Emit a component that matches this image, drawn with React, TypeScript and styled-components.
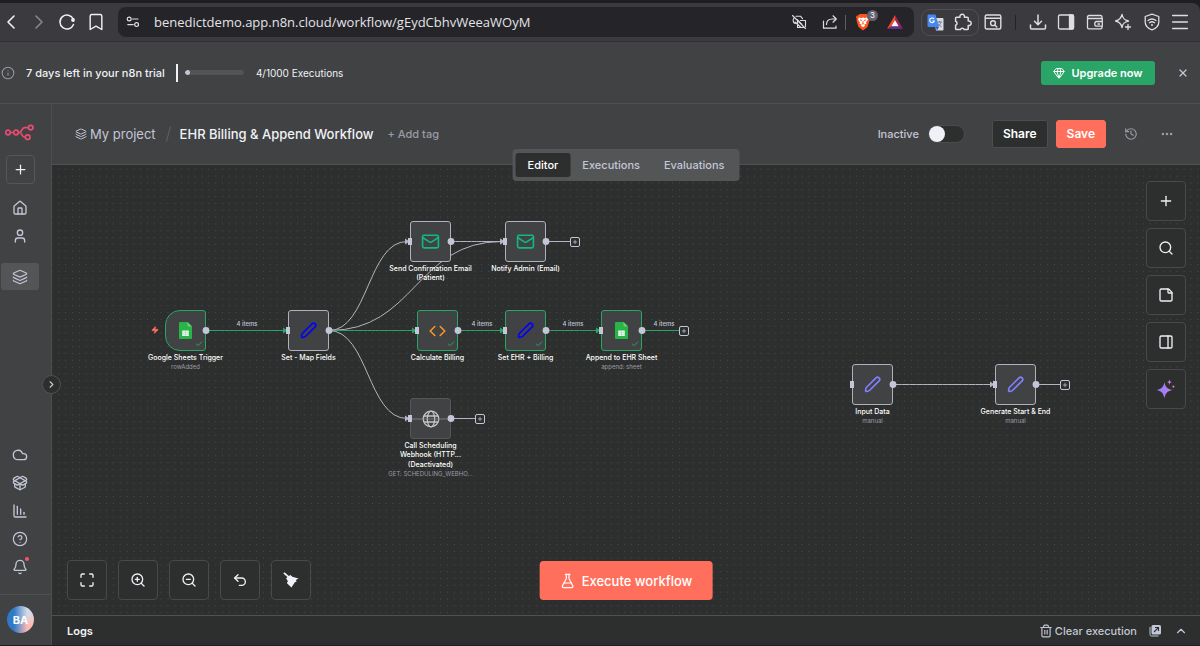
import React from "react";
import styled, { createGlobalStyle, css } from "styled-components";
import {
  Bell, Bookmark, ChartColumnDecreasing, ChevronLeft, ChevronRight, ChevronUp, CircleQuestionMark, Cloud,
  Ellipsis, FlaskConical, Gem, History, House, Info, Layers, Mail, Maximize, Menu, PackageOpen, PanelRight,
  Plus, Search, StickyNote, Trash2, Undo2, User, X, Zap, ZoomIn, ZoomOut, Check,
} from "lucide-react";

const c = {
  frame: "#1f1e23",
  chrome: "#3b3a3e",
  field: "#252429",
  panel: "#414244",
  canvas: "#2d2e2e",
  line: "#505153",
  soft: "#c3c6d6",
  text: "#f0f1f6",
  muted: "#9a9ca6",
  coral: "#ff6f5c",
  green: "#29a568",
  wire: "#b4b5c0",
};

const GlobalStyle = createGlobalStyle`
  *, *::before, *::after { box-sizing: border-box; }
  html, body { margin: 0; background: ${c.frame}; }
  body { font-family: Inter, "Liberation Sans", sans-serif; color: ${c.text}; font-size: 11px; line-height: 16px; }
  button, input { font: inherit; color: inherit; }
  button { cursor: pointer; padding: 0; }
  svg { display: block; flex: none; }
`;

const Page = styled.div`
  min-height: 100vh;
  display: flex;
  flex-direction: column;
  padding: 3px 0 1px;
`;

/* ---------- browser bar ---------- */
const BrowserBar = styled.header`
  height: 39px;
  display: flex;
  align-items: center;
  background: ${c.chrome};
  border-bottom: 1px solid #2f2e33;
  border-radius: 0 8px 0 0;
  color: #dddde2;
`;
const ChromeButton = styled.button<{ $width?: number; $dim?: boolean }>`
  width: ${(p) => p.$width ?? 28}px;
  height: 28px;
  flex: none;
  display: flex;
  align-items: center;
  justify-content: center;
  border: 0;
  background: none;
  color: ${(p) => (p.$dim ? "#88878c" : "inherit")};
`;
const NavButtons = styled.div`
  display: flex;
  width: 118px;
  padding-left: 1px;
  flex: none;
  color: #f1f1f4;
`;
const AddressBar = styled.div`
  flex: 1;
  min-width: 0;
  height: 30px;
  display: flex;
  align-items: center;
  background: ${c.field};
  border-radius: 8px;
  padding: 0 4px 0 1px;
`;
const UrlInput = styled.input`
  flex: 1;
  min-width: 0;
  margin-left: 7px;
  padding: 0;
  border: 0;
  outline: 0;
  background: none;
  color: #e3e3e8;
  font-family: "Open Sans", "Noto Sans", sans-serif;
  font-size: 13px;
  line-height: 20px;
`;
const Separator = styled.span<{ $dark?: boolean }>`
  width: 1px;
  height: 15px;
  flex: none;
  background: ${(p) => (p.$dark ? "#242328" : "#5d5c62")};
`;
const ShieldButton = styled(ChromeButton)`
  position: relative;
`;
const Count = styled.span`
  position: absolute;
  top: 2px;
  right: 2px;
  width: 11px;
  height: 11px;
  border-radius: 6px;
  background: #62636f;
  color: #fff;
  font-size: 8px;
  line-height: 11px;
`;
const ExtensionGroup = styled.div`
  display: flex;
  align-items: center;
  height: 27px;
  margin-left: 7px;
  border: 1px solid #504f54;
  border-radius: 9px;
`;
const ChromeTools = styled.div`
  display: flex;
  align-items: center;
  padding-right: 6px;
`;

/* ---------- trial banner ---------- */
const Banner = styled.section`
  height: 62px;
  display: flex;
  align-items: center;
  padding: 0 9px 0 1px;
  background: ${c.panel};
  border-bottom: 1px solid #4e4f50;
  font-weight: 500;
`;
const BannerText = styled.p`
  margin: 0 11px;
`;
const Caret = styled.span`
  width: 2px;
  height: 18px;
  background: #f1f1f5;
`;
const Usage = styled.label`
  display: flex;
  align-items: center;
  gap: 12px;
  margin-left: 7px;
  font-size: 10px;
  font-weight: 400;
`;
const Meter = styled.progress`
  appearance: none;
  width: 59px;
  height: 5px;
  border: 0;
  border-radius: 3px;
  overflow: hidden;
  &::-webkit-progress-bar { background: #535456; border-radius: 3px; }
  &::-webkit-progress-value { background: ${c.soft}; border-radius: 3px; min-width: 5px; }
`;
const UpgradeButton = styled.button`
  display: flex;
  align-items: center;
  justify-content: center;
  gap: 6px;
  width: 114px;
  height: 24px;
  margin-left: auto;
  border: 0;
  border-radius: 3px;
  background: ${c.green};
  color: #fff;
  font-weight: 600;
`;
const BareButton = styled.button`
  display: flex;
  align-items: center;
  justify-content: center;
  gap: 2px;
  min-width: 16px;
  height: 24px;
  border: 0;
  background: none;
  color: ${c.soft};
  font-weight: 500;
`;
const CloseButton = styled(BareButton)`
  width: 16px;
  margin-left: 20px;
`;

/* ---------- app shell ---------- */
const Shell = styled.div`
  flex: 1;
  display: flex;
`;
const Sidebar = styled.nav`
  position: relative;
  width: 52px;
  flex: none;
  display: flex;
  flex-direction: column;
  background: ${c.panel};
  border-right: 1px solid #4c4d4e;
  padding-top: 20px;
  color: ${c.soft};
`;
const Logo = styled.a`
  margin: 0 0 14px 5px;
`;
const AddButton = styled.button`
  width: 29px;
  height: 29px;
  margin: 0 0 10px 6px;
  display: flex;
  align-items: center;
  justify-content: center;
  border: 1px solid #555658;
  border-radius: 4px;
  background: none;
  color: ${c.text};
`;
const NavLink = styled.a<{ $active?: boolean }>`
  width: 38px;
  height: ${(p) => (p.$active ? 27 : 28)}px;
  margin-left: 1px;
  display: flex;
  align-items: center;
  justify-content: center;
  color: inherit;
  border-radius: 3px;
  ${(p) => p.$active && css`background: #545557; margin-top: 13px;`}
`;
const LowerNav = styled.div`
  margin-top: auto;
  padding-bottom: 13px;
  border-bottom: 1px solid ${c.line};
`;
const BellLink = styled(NavLink)`
  position: relative;
  &::after {
    content: "";
    position: absolute;
    top: 4px;
    right: 10px;
    width: 4px;
    height: 4px;
    border-radius: 2px;
    background: #ff5460;
  }
`;
const Account = styled.button`
  width: 27px;
  height: 27px;
  margin: 11px 0 12px 7px;
  border: 0;
  border-radius: 14px;
  background: linear-gradient(90deg, #2f79c5 25%, transparent 75%), linear-gradient(160deg, #d5dbe6 45%, #ffb9b2 75%);
  color: #fff;
  font-weight: 700;
`;
const ExpandButton = styled.button`
  position: absolute;
  z-index: 3;
  top: 271px;
  right: -10px;
  width: 19px;
  height: 19px;
  display: flex;
  align-items: center;
  justify-content: center;
  border: 1px solid ${c.line};
  border-radius: 10px;
  background: ${c.canvas};
  color: ${c.soft};
`;
const Main = styled.main`
  flex: 1;
  min-width: 0;
  display: flex;
  flex-direction: column;
`;

/* ---------- workflow header ---------- */
const WorkflowHeader = styled.div`
  position: relative;
  z-index: 2;
  height: 61px;
  display: flex;
  align-items: center;
  padding: 0 25px 0 23px;
  background: ${c.panel};
  border-bottom: 1px solid ${c.line};
  white-space: nowrap;
`;
const Project = styled.a`
  display: flex;
  align-items: center;
  gap: 3px;
  color: ${c.soft};
  font-size: 13px;
  line-height: 20px;
  text-decoration: none;
`;
const Slash = styled.span`
  width: 1px;
  height: 16px;
  margin: 0 11px 0 12px;
  background: #606166;
  transform: rotate(15deg);
`;
const Title = styled.h1`
  margin: 0;
  font-size: 13px;
  font-weight: 500;
  line-height: 20px;
`;
const AddTag = styled.button`
  margin-left: 14px;
  border: 0;
  background: none;
  color: ${c.muted};
  font-weight: 500;
`;
const Actions = styled.div`
  display: flex;
  align-items: center;
  margin-left: auto;
`;
const Activation = styled.label`
  display: flex;
  align-items: center;
  gap: 9px;
  margin-right: 27px;
  color: ${c.soft};
  font-weight: 500;
`;
const Switch = styled.input`
  appearance: none;
  width: 37px;
  height: 18px;
  margin: 0;
  padding: 1px;
  border-radius: 9px;
  border: 1px solid #4b4c4e;
  background: ${c.canvas};
  display: flex;
  align-items: center;
  &::before {
    content: "";
    width: 16px;
    height: 16px;
    margin-left: -1px;
    border-radius: 8px;
    background: ${c.text};
  }
  &:checked { background: ${c.green}; justify-content: flex-end; }
`;
const HeaderButton = styled.button<{ $primary?: boolean }>`
  height: 28px;
  padding: 0 10px;
  margin-right: 8px;
  border: 1px solid ${(p) => (p.$primary ? c.coral : "#4c4d4f")};
  border-radius: 3px;
  background: ${(p) => (p.$primary ? c.coral : c.canvas)};
  color: #fff;
  font-size: 12px;
  font-weight: 600;
`;
const HeaderIcons = styled.div`
  display: flex;
  gap: 20px;
  margin-left: 9px;
  svg { color: ${c.muted}; }
`;
const Tabs = styled.div`
  position: absolute;
  left: 50%;
  bottom: -17px;
  transform: translateX(-50%);
  display: flex;
  padding: 4px 3px;
  border-radius: 4px;
  background: #545557;
`;
const Tab = styled.button<{ $active?: boolean }>`
  height: 24px;
  padding: 0 12px;
  border: 0;
  border-radius: 3px;
  background: ${(p) => (p.$active ? c.canvas : "none")};
  color: ${(p) => (p.$active ? "#fff" : c.soft)};
  font-weight: 500;
`;

/* ---------- canvas ---------- */
const Canvas = styled.section`
  position: relative;
  flex: 1;
  min-height: 450px;
  overflow: hidden;
  background: ${c.canvas};
`;
const Wires = styled.svg`
  position: absolute;
  inset: 0;
  width: 100%;
  height: 100%;
`;
const Node = styled.article`
  position: absolute;
  width: 101px;
  display: flex;
  flex-direction: column;
  align-items: center;
  text-align: center;
`;
const NodeBox = styled.div<{ $tone: "plain" | "done" | "off"; $trigger?: boolean }>`
  position: relative;
  width: 41px;
  height: 41px;
  margin-bottom: 2px;
  display: flex;
  align-items: center;
  justify-content: center;
  border: 1px solid ${(p) => ({ plain: "#b0b1bb", done: c.green, off: "#555658" })[p.$tone]};
  border-radius: ${(p) => (p.$trigger ? "15px 3px 3px 15px" : "3px")};
  background: ${c.panel};
`;
const DoneMark = styled.span`
  position: absolute;
  right: 2px;
  bottom: 2px;
  color: ${c.green};
`;
const NodeTitle = styled.h2`
  margin: 0;
  max-width: 84px;
  font-size: 7px;
  line-height: 9px;
  font-weight: 500;
  color: #fff;
`;
const NodeState = styled.p`
  margin: 1px 0 0;
  font-size: 7px;
  line-height: 9px;
  font-weight: 500;
  color: #fff;
`;
const NodeNote = styled.p`
  margin: 0;
  font-size: 6px;
  line-height: 9px;
  color: ${c.muted};
  white-space: nowrap;
`;
const WireLabel = styled.span`
  position: absolute;
  width: 40px;
  text-align: center;
  font-size: 6px;
  line-height: 8px;
  font-weight: 500;
  color: ${c.soft};
`;
const TriggerMark = styled.span`
  position: absolute;
  color: ${c.coral};
`;
const AddNode = styled.button`
  position: absolute;
  width: 10px;
  height: 10px;
  display: flex;
  align-items: center;
  justify-content: center;
  border: 1px solid ${c.soft};
  border-radius: 2px;
  background: ${c.canvas};
  color: ${c.soft};
`;
const Tools = styled.div<{ $side: "right" | "bottom" }>`
  position: absolute;
  display: flex;
  ${(p) => p.$side === "right"
    ? css`top: 16px; right: 14px; flex-direction: column; gap: 7px;`
    : css`left: 15px; bottom: 15px; gap: 11px;`}
`;
const ToolButton = styled.button`
  width: 40px;
  height: 40px;
  display: flex;
  align-items: center;
  justify-content: center;
  border: 1px solid #49494b;
  border-radius: 4px;
  background: ${c.canvas};
  color: ${c.text};
`;
const ExecuteButton = styled.button`
  position: absolute;
  left: 50%;
  bottom: 15px;
  transform: translateX(-50%);
  height: 39px;
  padding: 0 20px;
  display: flex;
  align-items: center;
  gap: 6px;
  border: 0;
  border-radius: 4px;
  background: ${c.coral};
  color: #fff;
  font-size: 13px;
  font-weight: 500;
  white-space: nowrap;
`;
const LogsBar = styled.footer`
  height: 30px;
  display: flex;
  align-items: center;
  gap: 10px;
  padding: 0 11px 0 15px;
  border-top: 1px solid ${c.line};
  background: ${c.canvas};
`;
const LogsTitle = styled.h2`
  margin: 0 auto 0 0;
  font-size: 11px;
  font-weight: 600;
`;

/* ---------- drawings ---------- */
const stroke = { fill: "none", stroke: "currentColor", strokeLinecap: "round", strokeLinejoin: "round" } as const;

const ReloadIcon = () => (
  <svg width="18" height="18" viewBox="0 0 18 18" {...stroke} strokeWidth="1.5">
    <path d="M15.500 11.500A7 7 0 1 1 15.300 6" /><circle cx="15" cy="7" r="1.900" fill="currentColor" stroke="none" />
  </svg>
);
const TuneIcon = () => (
  <svg width="14" height="14" viewBox="0 0 14 14" {...stroke} strokeWidth="1.200">
    <circle cx="3.200" cy="4" r="1.900" /><path d="M6.500 4H12" /><circle cx="10.600" cy="9.600" r="1.900" /><path d="M1.800 9.600h5.400" />
  </svg>
);
const HiddenCameraIcon = () => (
  <svg width="16" height="16" viewBox="0 0 16 16" {...stroke} strokeWidth="1.100">
    <path d="M1.500 1.500l13 13M5 2.200l4.500 0 2 2.500M3 4C1.500 6 2 8.500 4 9.500M6.500 7v6.500h6M9.500 6.500h5v6M6 5.500l5 5M4 8l6 5.500" />
  </svg>
);
const ShareIcon = () => (
  <svg width="16" height="16" viewBox="0 0 16 16" {...stroke} strokeWidth="1.200">
    <path d="M1.500 7v7.200h12.500v-2M4.500 10.500C4.500 7 7 5 10.500 5H14M11 1.800L14.300 5 11 8.200" />
  </svg>
);
const LionIcon = () => (
  <svg width="16" height="18" viewBox="0 0 16 18">
    <path d="M4.500 1h7l1.500 1.500 1.500.3.500 2-.8 1.200.3 1.500-2 6.500L8 17.500 3.500 14l-2-6.500.3-1.500L1 4.800l.5-2L3 2.500z" fill="#fb5420" />
    <path d="M4 4.500l2.500.4L8 4.500l1.500.4L12 4.500l1 2-2 3 .5 1.300-2 .7.500 1.200L8 14.300l-2-1.600.5-1.200-2-.7.500-1.300-2-3z" fill="#fff" />
    <path d="M5 6.800l2 .8M11 6.800l-2 .8M8 8v2.500M6.700 11.200L8 10.600l1.300.6" stroke="#fb5420" strokeWidth=".9" fill="none" />
  </svg>
);
const TriangleIcon = () => (
  <svg width="18" height="16" viewBox="0 0 18 16">
    <path d="M9 1L1 15l4.500-2.700L9 6z" fill="#ff4b22" /><path d="M9 1l8 14-4.500-2.700L9 6z" fill="#a4225e" />
    <path d="M1 15h16l-4.500-2.700h-7z" fill="#662d91" /><path d="M9 6l3.600 6.300H5.400z" fill="#fff" />
  </svg>
);
const TranslateIcon = () => (
  <svg width="17" height="17" viewBox="0 0 17 17">
    <path d="M7 4h8.500a1 1 0 0 1 1 1v10.500a1 1 0 0 1-1 1H9z" fill="#d9dade" />
    <path d="M10 8h5M12.500 7v1M14 8c-.5 2-2 3.500-3.500 4.500M11 9.500c.8 1.500 2 2.500 3.500 3.200" stroke="#70809a" fill="none" />
    <path d="M1.500.5h7L12 13H1.500a1 1 0 0 1-1-1V1.500a1 1 0 0 1 1-1z" fill="#4688f1" />
    <path d="M7 5A2.300 2.300 0 1 0 7.300 7H5.300" stroke="#fff" strokeWidth="1.100" fill="none" /><path d="M8.500 13H12l-2 3.500z" fill="#2f62c9" />
  </svg>
);
const ExtensionIcon = () => (
  <svg width="18" height="18" viewBox="0 0 18 18" {...stroke} strokeWidth="1.500">
    <path d="M2.500 4.200H6a2.300 2.300 0 1 1 4.400 0h2.900a.9.900 0 0 1 .9.900v2.900a2.300 2.300 0 1 1 0 4.400v3.300a.9.900 0 0 1-.9.900H10.200a2 2 0 0 0-3.800 0H2.500a.9.900 0 0 1-.9-.9v-3.500a2.100 2.100 0 0 0 0-4V5.100a.9.900 0 0 1 .9-.9z" />
  </svg>
);
const PageSearchIcon = () => (
  <svg width="18" height="18" viewBox="0 0 18 18" {...stroke} strokeWidth="1.400">
    <rect x="1.200" y="2" width="15.600" height="14" rx="1.500" /><path d="M1.500 5.200h15M11 12.200l1.800 1.800" /><circle cx="9" cy="10.200" r="2.400" />
  </svg>
);
const DownloadIcon = () => (
  <svg width="18" height="18" viewBox="0 0 18 18" {...stroke} strokeWidth="1.500">
    <path d="M9 2v9.500M5.500 8.300L9 11.800l3.500-3.500M1.500 12v3q0 1 1 1h13q1 0 1-1v-3" />
  </svg>
);
const SidePanelIcon = () => (
  <svg width="18" height="18" viewBox="0 0 18 18" {...stroke} strokeWidth="1.300">
    <rect x="1.500" y="2" width="15" height="14" rx="1.500" /><path d="M12.500 2h3q1 0 1 1v12q0 1-1 1h-3z" fill="currentColor" />
  </svg>
);
const WalletIcon = () => (
  <svg width="18" height="18" viewBox="0 0 18 18" {...stroke} strokeWidth="1.300">
    <path d="M16 5.500V4q0-1.500-1.500-1.500H3Q1.500 2.500 1.500 4v10.500q0 1.300 1.300 1.300h12q1.200 0 1.200-1.300v-1.300M1.500 5.500h14.800v7.700h-5.500a2 2 0 0 1-2-2V10.500a2 2 0 0 1 2-2H16M12 11h1.500" />
  </svg>
);
const SparkIcon = () => (
  <svg width="18" height="18" viewBox="0 0 18 18" {...stroke} strokeWidth="1.300">
    <path d="M8 1.500c.8 4 2.200 5.500 6.500 6.500-4.300 1-5.700 2.500-6.500 6.500C7.200 10.500 5.700 9 1.500 8 5.700 7 7.200 5.500 8 1.500zM14 11.500v5M11.500 14h5" />
  </svg>
);
const VpnIcon = () => (
  <svg width="18" height="18" viewBox="0 0 18 18" {...stroke} strokeWidth="1.300">
    <path d="M9 1.200l6.800 2.300v5.500c0 3.800-3 6.500-6.800 7.900-3.800-1.400-6.800-4.100-6.800-7.900V3.500zM5 7.500q4-3 8 0M6.500 9.700q2.500-1.900 5 0" /><circle cx="9" cy="12" r="1" fill="currentColor" stroke="none" />
  </svg>
);
const N8nMark = () => (
  <svg width="29" height="17" viewBox="0 0 29 17" fill="none" stroke="#ea4b71" strokeWidth="1.700">
    <circle cx="3" cy="8.500" r="2.300" /><circle cx="11" cy="8.500" r="2.300" /><circle cx="25.700" cy="3.600" r="2.300" /><circle cx="22.700" cy="13.200" r="2.300" />
    <path d="M5.300 8.500h3.400M13.300 8.500h1.200c2.600 0 2-4.900 5-4.900h3.900M14.500 8.500c2.600 0 2.300 4.700 5 4.700h.9" />
  </svg>
);
const BroomIcon = () => (
  <svg width="18" height="18" viewBox="0 0 18 18" fill="currentColor">
    <path d="M1.300 2.600l1.300-1.300 4.200 3.800 1.500-1.200 2.100 1.800 6.200 1.800-2.700 1.500.7 1.500-1.700.8-3.500 5.200-4.600-4.400 1.200-1.900-1.900-2.600 1.300-1.500z" />
  </svg>
);
const StarsIcon = () => (
  <svg width="20" height="20" viewBox="0 0 19 19">
    <defs><linearGradient id="stars" x1="0" x2="1"><stop offset="0" stopColor="#8b80ff" /><stop offset=".55" stopColor="#b07cf0" /><stop offset="1" stopColor="#e879a8" /></linearGradient></defs>
    <path d="M8 3c1.200 4.700 2.300 6.200 7.500 7.500-5.200 1.300-6.300 3-7.500 7.700-1.200-4.700-2.300-6.400-7.500-7.700C5.700 9.200 6.800 7.700 8 3zM12.800.5c.3 1.700.7 2.100 2.200 2.500-1.500.4-1.900.8-2.200 2.500-.3-1.700-.8-2.100-2.300-2.500 1.500-.4 2-.8 2.300-2.500zM16.500 5.500c.2 1.200.5 1.500 1.700 1.800-1.200.3-1.500.6-1.700 1.700-.2-1.100-.5-1.400-1.700-1.700 1.200-.3 1.500-.6 1.700-1.800z" fill="url(#stars)" />
  </svg>
);
const PopOutIcon = () => (
  <svg width="13" height="13" viewBox="0 0 13 13">
    <path d="M1 3v7.500Q1 12 2.500 12H9.500" fill="none" stroke={c.soft} /><rect x="2.500" y="1" width="9.500" height="9.500" rx="1.500" fill={c.soft} />
    <path d="M5 8l4.300-4.300M6 3.500h3.500V7" stroke={c.canvas} fill="none" strokeWidth="1.100" />
  </svg>
);
const SheetIcon = () => (
  <svg width="13" height="17" viewBox="0 0 13 17">
    <path d="M1 0h7.500L13 4.500V16a1 1 0 0 1-1 1H1a1 1 0 0 1-1-1V1a1 1 0 0 1 1-1z" fill="#28b446" /><path d="M8.500 0L13 4.500H9.500a1 1 0 0 1-1-1z" fill="#6ace7c" />
    <rect x="3.200" y="8.500" width="6.600" height="5.500" fill="#eef9f0" /><path d="M3.200 10.300h6.600M3.200 12.200h6.600M6.500 8.500v5.500" stroke="#8fd79d" strokeWidth=".5" />
  </svg>
);
const PenIcon = ({ color }: { color: string }) => (
  <svg width="17" height="17" viewBox="0 0 17 17" fill="none" stroke={color} strokeWidth="1.600" strokeLinejoin="round">
    <path d="M1.700 13.200q.1-1.200.9-2L12 1.900a2.100 2.100 0 0 1 3.100 3L5.700 14.300q-.8.800-2 .9l-1.200.2q-1 .1-.9-.9z" />
  </svg>
);
const CodeIcon = () => (
  <svg width="17" height="12" viewBox="0 0 17 12" fill="none" stroke="#ff9922" strokeWidth="1.500" strokeLinecap="round" strokeLinejoin="round">
    <path d="M5.800 1.500L1.200 6l4.600 4.500M11.200 1.500L15.800 6l-4.600 4.500" />
  </svg>
);
const GlobeIcon = () => (
  <svg width="18" height="18" viewBox="0 0 18 18" fill="none" stroke="#c4c4c6" strokeWidth="1.300" overflow="visible">
    <circle cx="9" cy="9" r="7.800" /><ellipse cx="9" cy="9" rx="3.700" ry="7.800" /><path d="M2 6h14M2 12h14" /><path d="M-10 9h38" stroke="#8a8b90" strokeWidth=".8" />
  </svg>
);

/* ---------- workflow data, in canvas coordinates ---------- */
type NodeData = {
  x: number; y: number; title: string; note?: string; state?: string; icon: React.ReactNode;
  tone: "plain" | "done" | "off"; trigger?: boolean; add?: boolean; check?: boolean;
};
const SIZE = 41;
const mail = <Mail size={19} strokeWidth={2} color="#10b981" />;
const nodes: NodeData[] = [
  { x: 113, y: 145, title: "Google Sheets Trigger", note: "rowAdded", icon: <SheetIcon />, tone: "done", trigger: true, check: true },
  { x: 236, y: 145, title: "Set - Map Fields", icon: <PenIcon color="#0000ff" />, tone: "plain" },
  { x: 358, y: 56, title: "Send Confirmation Email (Patient)", icon: mail, tone: "plain" },
  { x: 453, y: 56, title: "Notify Admin (Email)", icon: mail, tone: "plain", add: true },
  { x: 365, y: 145, title: "Calculate Billing", icon: <CodeIcon />, tone: "done", check: true },
  { x: 453, y: 145, title: "Set EHR + Billing", icon: <PenIcon color="#0000ff" />, tone: "done", check: true },
  { x: 549, y: 145, title: "Append to EHR Sheet", note: "append: sheet", icon: <SheetIcon />, tone: "done", check: true, add: true },
  { x: 358, y: 233, title: "Call Scheduling Webhook (HTTP...", state: "(Deactivated)", note: "GET: SCHEDULING_WEBHO...", icon: <GlobeIcon />, tone: "off", add: true },
  { x: 800, y: 199, title: "Input Data", note: "manual", icon: <PenIcon color="#8181ff" />, tone: "plain" },
  { x: 943, y: 199, title: "Generate Start & End", note: "manual", icon: <PenIcon color="#8181ff" />, tone: "plain", add: true },
];
const links: [number, number, boolean][] = [
  [0, 1, true], [1, 2, false], [1, 3, false], [1, 4, true], [1, 7, false],
  [2, 3, false], [4, 5, true], [5, 6, true], [8, 9, false],
];
const wireLabels = [{ x: 175, y: 155 }, { x: 410, y: 155 }, { x: 501, y: 155 }, { x: 592, y: 155 }];

/* a labelled outgoing wire is longer, to leave room for its item count */
const tailLength = (n: NodeData) => (n.tone === "done" ? 37 : 24);

const linkPath = (from: NodeData, to: NodeData) => {
  const x1 = from.x + SIZE, y1 = from.y + SIZE / 2, x2 = to.x - 3, y2 = to.y + SIZE / 2;
  const mid = (x1 + x2) / 2;
  return `M${x1} ${y1}C${mid} ${y1} ${mid} ${y2} ${x2} ${y2}`;
};

const Diagram = () => (
  <>
    <Wires aria-hidden="true">
      <defs>
        <pattern id="grid" x="3.400" y=".9" width="6.820" height="6.820" patternUnits="userSpaceOnUse">
          <circle cx="3.400" cy="3.400" r=".55" fill="#505152" />
        </pattern>
      </defs>
      <rect width="100%" height="100%" fill="url(#grid)" />
      {links.map(([a, b, done]) => {
        const to = nodes[b];
        const color = done ? c.green : c.wire;
        const y = to.y + SIZE / 2;
        return (
          <g key={`${a}-${b}`}>
            <path d={linkPath(nodes[a], to)} fill="none" stroke={color} strokeWidth="1" />
            <path d={`M${to.x - 5} ${y - 3}l4.500 3-4.500 3z`} fill={color} />
          </g>
        );
      })}
      {nodes.filter((n) => n.add).map((n) => (
        <path key={n.title} d={`M${n.x + SIZE} ${n.y + SIZE / 2}h${tailLength(n)}`} stroke={n.tone === "done" ? c.green : c.wire} />
      ))}
    </Wires>
    {nodes.map((n) => (
      <Node key={n.title} style={{ left: n.x - 30, top: n.y }}>
        <NodeBox $tone={n.tone} $trigger={n.trigger}>
          {n.icon}
          {n.check && <DoneMark><Check size={8} strokeWidth={3} /></DoneMark>}
        </NodeBox>
        <NodeTitle>{n.title}</NodeTitle>
        {n.state && <NodeState>{n.state}</NodeState>}
        {n.note && <NodeNote>{n.note}</NodeNote>}
      </Node>
    ))}
    <Wires aria-hidden="true" pointerEvents="none">
      {nodes.map((n) => (
        <g key={n.title} fill={c.soft}>
          {!n.trigger && <rect x={n.x - 2} y={n.y + 17} width="4" height="7" />}
          <circle cx={n.x + SIZE} cy={n.y + SIZE / 2} r="3.400" />
        </g>
      ))}
    </Wires>
    {wireLabels.map((l) => <WireLabel key={l.x} style={{ left: l.x, top: l.y }}>4 items</WireLabel>)}
    <TriggerMark style={{ left: 99, top: 161 }}><Zap size={8} fill="currentColor" /></TriggerMark>
    {nodes.filter((n) => n.add).map((n) => (
      <AddNode key={n.title} aria-label={`Add node after ${n.title}`} style={{ left: n.x + SIZE + tailLength(n), top: n.y + 16 }}>
        <Plus size={6} strokeWidth={3} />
      </AddNode>
    ))}
  </>
);

export default function App() {
  return (
    <Page>
      <GlobalStyle />
      <BrowserBar>
        <NavButtons>
          <ChromeButton $width={20} aria-label="Back"><ChevronLeft size={24} strokeWidth={1.6} /></ChromeButton>
          <ChromeButton $width={36} $dim aria-label="Forward"><ChevronRight size={24} strokeWidth={1.6} /></ChromeButton>
          <ChromeButton $width={20} aria-label="Reload"><ReloadIcon /></ChromeButton>
          <ChromeButton $width={37} aria-label="Bookmark"><Bookmark size={20} strokeWidth={1.7} /></ChromeButton>
        </NavButtons>
        <AddressBar>
          <ChromeButton aria-label="Site information"><TuneIcon /></ChromeButton>
          <UrlInput aria-label="Address" defaultValue="benedictdemo.app.n8n.cloud/workflow/gEydCbhvWeeaWOyM" />
          <ChromeButton $width={30} aria-label="Camera blocked"><HiddenCameraIcon /></ChromeButton>
          <ChromeButton $width={31} aria-label="Share page"><ShareIcon /></ChromeButton>
          <Separator />
          <ShieldButton $width={34} aria-label="Shields"><LionIcon /><Count>3</Count></ShieldButton>
          <ChromeButton $width={30} aria-label="Rewards"><TriangleIcon /></ChromeButton>
        </AddressBar>
        <ExtensionGroup>
          <ChromeButton $width={26} aria-label="Translate"><TranslateIcon /></ChromeButton>
          <ChromeButton $width={30} aria-label="Extensions"><ExtensionIcon /></ChromeButton>
        </ExtensionGroup>
        <ChromeTools>
          <ChromeButton aria-label="Find in page"><PageSearchIcon /></ChromeButton>
          <ChromeButton $width={16} as="span"><Separator $dark /></ChromeButton>
          <ChromeButton $width={29} aria-label="Downloads"><DownloadIcon /></ChromeButton>
          <ChromeButton aria-label="Side panel"><SidePanelIcon /></ChromeButton>
          <ChromeButton $width={29} aria-label="Wallet"><WalletIcon /></ChromeButton>
          <ChromeButton aria-label="Assistant"><SparkIcon /></ChromeButton>
          <ChromeButton $width={29} aria-label="VPN"><VpnIcon /></ChromeButton>
          <ChromeButton aria-label="Menu"><Menu size={22} strokeWidth={1.6} /></ChromeButton>
        </ChromeTools>
      </BrowserBar>

      <Banner>
        <Info size={14} strokeWidth={1.8} color="#96989f" />
        <BannerText>7 days left in your n8n trial</BannerText>
        <Caret />
        <Usage><Meter value={4} max={1000} />4/1000 Executions</Usage>
        <UpgradeButton><Gem size={12} />Upgrade now</UpgradeButton>
        <CloseButton aria-label="Dismiss"><X size={12} strokeWidth={2.4} /></CloseButton>
      </Banner>

      <Shell>
        <Sidebar aria-label="Main">
          <Logo href="#" aria-label="n8n"><N8nMark /></Logo>
          <AddButton aria-label="Create"><Plus size={15} /></AddButton>
          <NavLink href="#" aria-label="Overview"><House size={16} /></NavLink>
          <NavLink href="#" aria-label="Personal"><User size={16} /></NavLink>
          <NavLink href="#" aria-label="My project" $active><Layers size={16} strokeWidth={1.8} /></NavLink>
          <LowerNav>
            <NavLink href="#" aria-label="Admin panel"><Cloud size={16} /></NavLink>
            <NavLink href="#" aria-label="Templates"><PackageOpen size={16} /></NavLink>
            <NavLink href="#" aria-label="Insights"><ChartColumnDecreasing size={16} /></NavLink>
            <NavLink href="#" aria-label="Help"><CircleQuestionMark size={16} strokeWidth={1.8} /></NavLink>
            <BellLink href="#" aria-label="Updates"><Bell size={16} /></BellLink>
          </LowerNav>
          <Account aria-label="Account BA">BA</Account>
          <ExpandButton aria-label="Expand sidebar"><ChevronRight size={11} strokeWidth={2.5} /></ExpandButton>
        </Sidebar>

        <Main>
          <WorkflowHeader>
            <Project href="#"><Layers size={12} />My project</Project>
            <Slash />
            <Title>EHR Billing &amp; Append Workflow</Title>
            <AddTag>+ Add tag</AddTag>
            <Actions>
              <Activation>Inactive<Switch type="checkbox" /></Activation>
              <HeaderButton>Share</HeaderButton>
              <HeaderButton $primary>Save</HeaderButton>
              <HeaderIcons>
                <BareButton aria-label="Version history"><History size={14} /></BareButton>
                <BareButton aria-label="More"><Ellipsis size={14} strokeWidth={2.4} /></BareButton>
              </HeaderIcons>
            </Actions>
            <Tabs role="tablist">
              <Tab role="tab" aria-selected $active>Editor</Tab>
              <Tab role="tab">Executions</Tab>
              <Tab role="tab">Evaluations</Tab>
            </Tabs>
          </WorkflowHeader>

          <Canvas aria-label="Workflow canvas">
            <Diagram />
            <Tools $side="right">
              <ToolButton aria-label="Add node"><Plus size={16} /></ToolButton>
              <ToolButton aria-label="Search"><Search size={16} /></ToolButton>
              <ToolButton aria-label="Add note"><StickyNote size={16} /></ToolButton>
              <ToolButton aria-label="Toggle panel"><PanelRight size={16} /></ToolButton>
              <ToolButton aria-label="Ask assistant"><StarsIcon /></ToolButton>
            </Tools>
            <Tools $side="bottom">
              <ToolButton aria-label="Fit view"><Maximize size={16} /></ToolButton>
              <ToolButton aria-label="Zoom in"><ZoomIn size={16} /></ToolButton>
              <ToolButton aria-label="Zoom out"><ZoomOut size={16} /></ToolButton>
              <ToolButton aria-label="Undo"><Undo2 size={16} /></ToolButton>
              <ToolButton aria-label="Tidy up"><BroomIcon /></ToolButton>
            </Tools>
            <ExecuteButton><FlaskConical size={16} strokeWidth={1.8} />Execute workflow</ExecuteButton>
          </Canvas>

          <LogsBar>
            <LogsTitle>Logs</LogsTitle>
            <BareButton><Trash2 size={14} />Clear execution</BareButton>
            <BareButton aria-label="Pop out"><PopOutIcon /></BareButton>
            <BareButton aria-label="Open logs"><ChevronUp size={14} strokeWidth={2} /></BareButton>
          </LogsBar>
        </Main>
      </Shell>
    </Page>
  );
}
